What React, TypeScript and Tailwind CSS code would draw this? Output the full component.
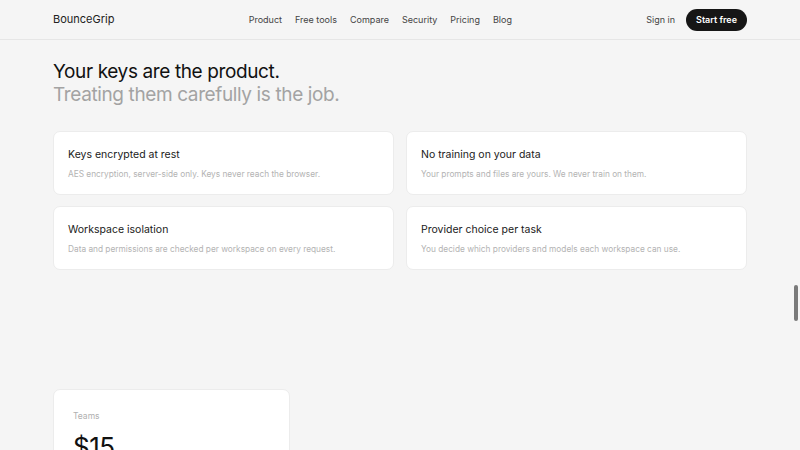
const nav = ['Product', 'Free tools', 'Compare', 'Security', 'Pricing', 'Blog'];

const features = [
  { title: 'Keys encrypted at rest', body: 'AES encryption, server-side only. Keys never reach the browser.' },
  { title: 'No training on your data', body: 'Your prompts and files are yours. We never train on them.' },
  { title: 'Workspace isolation', body: 'Data and permissions are checked per workspace on every request.' },
  { title: 'Provider choice per task', body: 'You decide which providers and models each workspace can use.' },
];

const App = () => {
  return (
    <div
      className="relative h-[450px] w-full overflow-hidden bg-[#f5f5f5] text-[#111]"
      style={{ fontFamily: 'Inter, "Noto Sans", sans-serif' }}
    >
      <header className="h-10 border-b border-[#e6e6e6]">
        <div className="mx-auto flex h-full w-[694px] items-center justify-between">
          <span className="text-[11px] text-[#222]">BounceGrip</span>
          <nav className="flex items-center gap-[13px] text-[9px] text-[#444]">
            {nav.map(item => (
              <a key={item}>{item}</a>
            ))}
          </nav>
          <div className="flex items-center gap-[11px]">
            <a className="text-[9px] text-[#444]">Sign in</a>
            <button className="h-[22px] rounded-full bg-[#161616] px-[10px] text-[9px] font-semibold text-white">
              Start free
            </button>
          </div>
        </div>
      </header>

      <main className="mx-auto w-[694px]">
        <section className="pt-[20px]">
          <h2 className="text-[19px] leading-[23px] tracking-[-0.02em]">
            <span className="block text-[#111]">Your keys are the product.</span>
            <span className="block text-[#a3a3a3]">Treating them carefully is the job.</span>
          </h2>
          <div className="mt-[25px] grid grid-cols-2 gap-x-[12px] gap-y-[11px]">
            {features.map(f => (
              <div
                key={f.title}
                className="h-[64px] rounded-[7px] border border-[#ececec] bg-white px-[14px] pt-[16px]"
              >
                <div className="text-[10.5px] leading-[14px] text-[#1a1a1a]">{f.title}</div>
                <div className="mt-[7px] text-[8.3px] leading-[10px] text-[#b3b3b3]">{f.body}</div>
              </div>
            ))}
          </div>
        </section>

        <section className="mt-[119px]">
          <div className="h-[80px] w-[237px] rounded-t-[7px] border border-[#ececec] bg-white px-[19px] pt-[20px]">
            <div className="text-[8.5px] text-[#b0b0b0]">Teams</div>
            <div className="mt-[11px] text-[26px] leading-none tracking-[-0.02em] text-[#111]">$15</div>
          </div>
        </section>
      </main>

      <div className="absolute right-[2px] top-[285px] h-[36px] w-[4px] rounded-full bg-[#7a7a7a]" />
    </div>
  );
};

export default App;
